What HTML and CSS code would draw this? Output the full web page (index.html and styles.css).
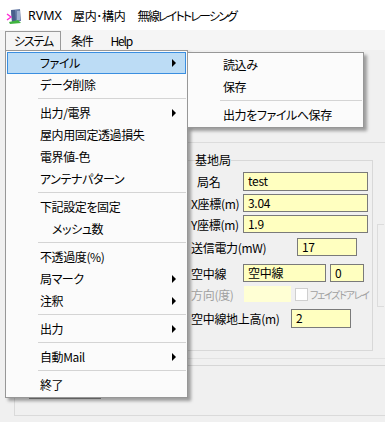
FILE: index.html
```html
<!DOCTYPE html>
<html lang="ja">
<head>
	<meta charset="UTF-8">
	<title>RVMX</title>
	<link rel="stylesheet" href="styles.css">
</head>
<body>
	<div class="window">
		<div class="titlebar">
			<svg class="appicon" viewBox="0 0 16 16" width="16" height="16">
				<polygon points="5,2 14,1 15,13 6,14" fill="#6b7fa8"/>
				<polygon points="5,2 9,2 10,14 6,14" fill="#4a5f8c"/>
				<polygon points="11,3 14,3 14,12 11,12" fill="#9fb0cf"/>
				<polyline points="1,6 5,9 1,12" fill="none" stroke="#ff2bd6" stroke-width="1.4"/>
				<polygon points="3,14 12,12 15,15 4,16" fill="#3fb43f"/>
			</svg>
			<span class="t-app">RVMX</span>
			<span class="t-part">屋内･構内</span>
			<span class="t-part2">無線レイトトレーシング</span>
		</div>

		<div class="menubar">
			<span class="mb-item open">システム</span>
			<span class="mb-item">条件</span>
			<span class="mb-item">Help</span>
		</div>

		<div class="client">
			<div class="frame">
				<div class="toppanel"></div>
				<div class="groups">
					<div class="leftcol"></div>
					<fieldset class="group">
						<legend>基地局</legend>
						<div class="row r1">
							<label class="lbl w52 ind">局名</label>
							<div class="inp wide">test</div>
						</div>
						<div class="row r2">
							<label class="lbl w52">X座標(m)</label>
							<div class="inp wide">3.04</div>
						</div>
						<div class="row r3">
							<label class="lbl w52">Y座標(m)</label>
							<div class="inp wide">1.9</div>
						</div>
						<div class="row r4">
							<label class="lbl w106">送信電力(mW)</label>
							<div class="inp short">17</div>
						</div>
						<div class="row r5">
							<label class="lbl w52">空中線</label>
							<div class="inp ant">空中線</div>
							<div class="inp num">0</div>
						</div>
						<div class="row r6">
							<label class="lbl w52 dis">方向(度)</label>
							<div class="inp off"></div>
							<span class="chk"></span>
							<span class="dis chklbl">フェイズドアレイ</span>
						</div>
						<div class="row r7">
							<label class="lbl w100">空中線地上高(m)</label>
							<div class="inp h19">2</div>
						</div>
					</fieldset>
					<div class="group2"></div>
				</div>
				<div class="hr1"></div>
				<div class="hr2"></div>
				<div class="btn"></div>
			</div>
		</div>

		<!-- dropped menus -->
		<div class="menu main">
			<div class="mi hot">ファイル<span class="arrow"></span></div>
			<div class="mi">データ削除</div>
			<div class="sep"></div>
			<div class="mi">出力/電界<span class="arrow"></span></div>
			<div class="mi">屋内用固定透過損失</div>
			<div class="mi">電界値-色</div>
			<div class="mi">アンテナパターン</div>
			<div class="sep"></div>
			<div class="mi">下記設定を固定</div>
			<div class="mi sub-item">メッシュ数</div>
			<div class="sep"></div>
			<div class="mi">不透過度(%)</div>
			<div class="mi">局マーク<span class="arrow"></span></div>
			<div class="mi">注釈<span class="arrow"></span></div>
			<div class="sep"></div>
			<div class="mi">出力<span class="arrow"></span></div>
			<div class="sep"></div>
			<div class="mi">自動Mail<span class="arrow"></span></div>
			<div class="sep"></div>
			<div class="mi">終了</div>
		</div>

		<div class="menu sub">
			<div class="mi">読込み</div>
			<div class="mi">保存</div>
			<div class="sep"></div>
			<div class="mi">出力をファイルへ保存</div>
		</div>
	</div>
</body>
</html>
```

FILE: styles.css
```css
*{
	box-sizing: border-box;
}

body{
	margin: 0;
	width: 385px;
	height: 422px;
	overflow: hidden;
	background: #f0f0f0;
	font-family: "Noto Sans CJK JP", "Noto Sans", sans-serif;
	font-size: 12px;
	color: #000;
	font-feature-settings: "palt";
}

.window{
	position: relative;
	height: 422px;
}

/* title */
.titlebar{
	height: 30px;
	background: #fff;
	display: flex;
	align-items: center;
	padding-left: 6px;
	font-size: 12px;
}
.appicon{
	display: block;
	margin-top: 1px;
}
.t-app{
	margin-left: 6px;
	font-family: "Noto Sans", sans-serif;
	font-size: 12.5px;
}
.t-part{
	margin-left: 11px;
	letter-spacing: -0.3px;
}
.t-part2{
	margin-left: 12px;
	letter-spacing: -1.8px;
}

/* menu bar */
.menubar{
	height: 20px;
	background: #f5f5f5;
	display: flex;
	padding-left: 5px;
}
.mb-item{
	border: 1px solid transparent;
	border-bottom: none;
	padding: 0 7px 0 9px;
	line-height: 18px;
	margin-top: 1px;
	letter-spacing: -1.2px;
}
.mb-item.open{
	padding-left: 8px;
	border-color: #9a9a9a;
}

/* client area behind the menus */
.client{
	padding: 5px 0 0 14px;
}
.frame{
	height: 361px;
	border-left: 1px solid #dadada;
	border-bottom: 1px solid #dadada;
	overflow: hidden;
}
.toppanel{
	height: 88px;
	border-bottom: 1px solid #dcdcdc;
}
.groups{
	display: flex;
	align-items: flex-start;
}
.leftcol{
	width: 171px;
	flex: none;
}
.group{
	flex: none;
	margin: 9px 0 0 0;
	padding: 0 0 22px 4px;
	width: 187px;
	border: 1px solid #d8d8d8;
	min-width: 0;
}
.group legend{
	margin-left: 4px;
	padding: 0;
	line-height: 16px;
}
.group2{
	flex: none;
	margin: 81px 0 0 4px;
	width: 7px;
	height: 83px;
	border: 1px solid #dcdcdc;
	border-right: none;
}

.row{
	display: flex;
	align-items: center;
	height: 19px;
}
.r1{ margin-top: 4px; }
.r2{ margin-top: 3px; height: 18px; }
.r3{ margin-top: 3px; height: 18px; }
.r4{ margin-top: 5px; height: 18px; }
.r5{ margin-top: 8px; height: 18px; }
.r6{ margin-top: 3px; height: 18px; }
.r7{ margin-top: 6px; }

.lbl{
	flex: none;
	white-space: nowrap;
	font-size: 12px;
	letter-spacing: -0.3px;
}
.w52{ width: 52px; }
.w106{ width: 106px; }
.w100{ width: 100px; }
.ind{ padding-left: 6px; }
.dis{
	color: #a0a0a0;
}

.inp{
	flex: none;
	height: 100%;
	background: #ffffc0;
	border: 1px solid #7a7a7a;
	padding-left: 4px;
	font-size: 12px;
	line-height: 16px;
	white-space: nowrap;
	letter-spacing: -0.3px;
}
.wide{ width: 125px; }
.short{ width: 60px; }
.ant{ width: 83px; }
.num{ width: 34px; margin-left: 4px; }
.off{
	width: 49px;
	background: #ffffd4;
	border-color: #f0f0f0;
}
.h19{ width: 60px; }
.chk{
	width: 13px;
	height: 13px;
	margin-left: 3px;
	background: #fff;
	border: 1px solid #cfcfcf;
	flex: none;
}
.chklbl{
	margin-left: 2px;
	font-size: 10px;
	white-space: nowrap;
	letter-spacing: -1.3px;
}

.hr1{
	margin-top: 7px;
	border-top: 1px solid #e2e2e2;
}
.hr2{
	margin-top: 6px;
	border-top: 1px solid #d6d6d6;
	margin-left: 173px;
}
.btn{
	margin: 9px 0 0 14px;
	width: 72px;
	height: 24px;
	background: #e1e1e1;
	border: 1px solid #8f8f8f;
}

/* dropped menus */
.menu{
	position: absolute;
	background: #fbfbfb;
	border: 1px solid #979797;
	padding: 1px;
	box-shadow: 3px 3px 3px rgba(0,0,0,0.35);
	letter-spacing: -0.4px;
}
.main{
	left: 5px;
	top: 50px;
	width: 183px;
}
.sub{
	left: 187px;
	top: 52px;
	width: 177px;
}
.mi{
	height: 22px;
	line-height: 22px;
	padding-left: 33px;
	position: relative;
	white-space: nowrap;
}
.sub .mi{
	padding-left: 34px;
}
.mi.hot{
	background: #bcdcf5;
	border: 1px solid #3a8ee0;
	line-height: 20px;
	padding-left: 32px;
}
.mi.sub-item{
	padding-left: 45px;
}
.arrow{
	position: absolute;
	right: 10px;
	top: 7px;
	width: 0;
	height: 0;
	border-left: 4px solid #000;
	border-top: 4px solid transparent;
	border-bottom: 4px solid transparent;
}
.mi.hot .arrow{
	top: 6px;
	right: 9px;
}
.sep{
	height: 6px;
	padding-top: 2px;
	margin-left: 31px;
}
.sep::before{
	content: "";
	display: block;
	border-top: 1px solid #d4d4d4;
}
```
